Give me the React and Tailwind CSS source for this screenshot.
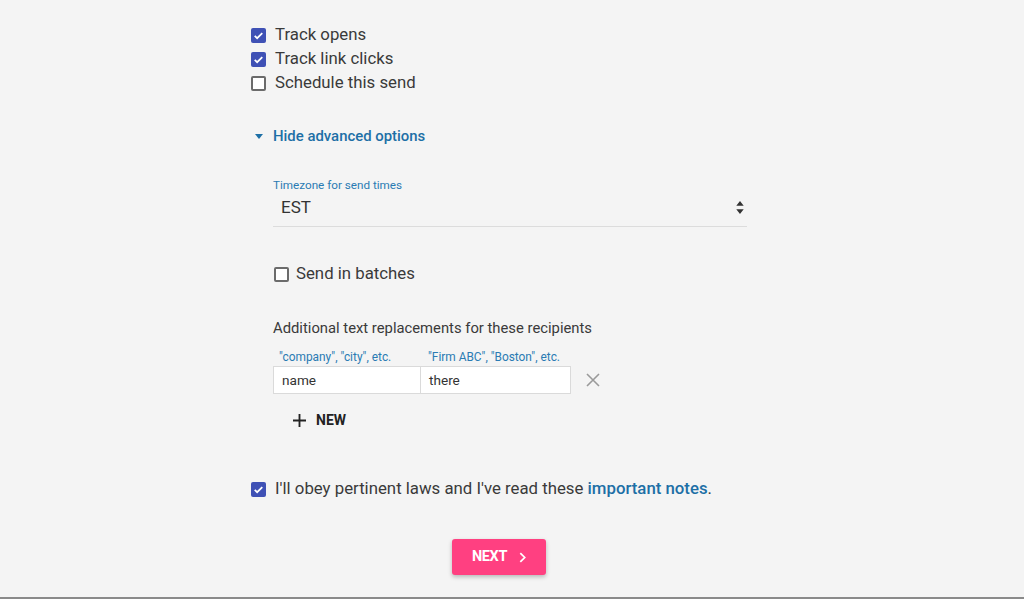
import React, { useState } from 'react';

// Small material-ish checkbox
const Check = ({ checked, onClick }) => (
  <span
    onClick={onClick}
    className={`flex h-[15px] w-[15px] shrink-0 items-center justify-center rounded-[2px] ${
      checked ? 'bg-[#3f51b5]' : 'border-2 border-[#6b6b6b] bg-white'
    }`}
  >
    {checked && (
      <svg viewBox="0 0 24 24" className="h-[13px] w-[13px]" fill="none" stroke="white" strokeWidth="3.2">
        <path d="M5 12.5l4.5 4.5L19 7.5" />
      </svg>
    )}
  </span>
);

const CheckRow = ({ label, checked, onToggle, className = '' }) => (
  <label className={`flex h-6 cursor-pointer items-center ${className}`}>
    <Check checked={checked} onClick={onToggle} />
    <span className="text-[16.8px] text-[#3a3a3a]">{label}</span>
  </label>
);

export default function App() {
  const [opts, setOpts] = useState({ opens: true, clicks: true, schedule: false, batches: false, laws: true });
  const toggle = (k) => setOpts((o) => ({ ...o, [k]: !o[k] }));

  return (
    <div className="flex h-[599px] flex-col bg-[#f4f4f4] font-['Roboto',sans-serif]">
      <div className="flex-1">
        <div className="ml-[251px] w-[496px] pt-[23px]">
          <CheckRow className="gap-[9px]" label="Track opens" checked={opts.opens} onToggle={() => toggle('opens')} />
          <CheckRow className="gap-[9px]" label="Track link clicks" checked={opts.clicks} onToggle={() => toggle('clicks')} />
          <CheckRow className="gap-[9px]" label="Schedule this send" checked={opts.schedule} onToggle={() => toggle('schedule')} />

          {/* advanced toggle */}
          <div className="mt-[29px] flex h-6 items-center gap-[10px] pl-[4px]">
            <svg viewBox="0 0 10 6" className="h-[5px] w-[8px]" fill="#1d6fa6">
              <path d="M0 0h10L5 6z" />
            </svg>
            <span className="text-[14.9px] font-medium text-[#1d6fa6]">Hide advanced options</span>
          </div>

          <div className="pl-[22px]">
            <div className="mt-[29px] text-[11.7px] leading-4 text-[#2a7bb3]">Timezone for send times</div>
            <div className="flex h-[34px] items-center justify-between border-b border-[#dcdcdc] pb-[4px] pl-2 pr-[3px]">
              <span className="text-[17px] text-[#333]">EST</span>
              <svg viewBox="0 0 8 14" className="h-[13px] w-[8px]" fill="#333">
                <path d="M4 0L8 5H0z M4 14L0 9h8z" />
              </svg>
            </div>

            <CheckRow
              className="mt-[35px] gap-[7px] pl-px"
              label="Send in batches"
              checked={opts.batches}
              onToggle={() => toggle('batches')}
            />

            <div className="mt-[32px] text-[14.8px] leading-5 text-[#3a3a3a]">
              Additional text replacements for these recipients
            </div>
            <div className="mt-3 flex text-[11.9px] leading-[14px] text-[#2a7bb3]">
              <span className="w-[148px] pl-[6px]">"company", "city", etc.</span>
              <span className="pl-[7px]">"Firm ABC", "Boston", etc.</span>
            </div>
            <div className="mt-[2px] flex items-center">
              <div className="flex h-[28px] w-[148px] items-center border border-[#dadada] bg-white pl-2 text-[13.6px] text-[#333]">
                name
              </div>
              <div className="flex h-[28px] w-[150px] items-center border border-l-0 border-[#dadada] bg-white pl-2 text-[13.6px] text-[#333]">
                there
              </div>
              <svg viewBox="0 0 14 14" className="ml-[15px] h-[14px] w-[14px]" stroke="#9a9a9a" strokeWidth="1.6">
                <path d="M1 1l12 12M13 1L1 13" />
              </svg>
            </div>
            <div className="mt-[12px] flex h-[28px] items-center gap-[10px] pl-[20px]">
              <svg viewBox="0 0 14 14" className="h-[13px] w-[13px]" stroke="#222" strokeWidth="2">
                <path d="M7 0v14M0 7h14" />
              </svg>
              <span className="text-[14px] font-bold text-[#222]">NEW</span>
            </div>
          </div>

          <label className="mt-[43px] flex h-6 cursor-pointer items-center gap-[9px]">
            <Check checked={opts.laws} onClick={() => toggle('laws')} />
            <span className="text-[16.8px] text-[#3a3a3a]">
              I'll obey pertinent laws and I've read these{' '}
              <span className="font-medium text-[#1d6fa6]">important notes</span>.
            </span>
          </label>

          <div className="mt-[38px] flex justify-center">
            <button className="flex h-[36px] w-[94px] items-center justify-center gap-[12px] rounded-[3px] bg-[#ff4081] shadow-[0_2px_4px_rgba(0,0,0,0.25)]">
              <span className="text-[14.5px] font-bold tracking-tight text-white">NEXT</span>
              <svg viewBox="0 0 8 12" className="h-[11px] w-[7px]" fill="none" stroke="white" strokeWidth="2">
                <path d="M1.5 1l5 5-5 5" />
              </svg>
            </button>
          </div>
        </div>
      </div>
      <div className="h-[2px] bg-[#8a8a8a]" />
    </div>
  );
}
